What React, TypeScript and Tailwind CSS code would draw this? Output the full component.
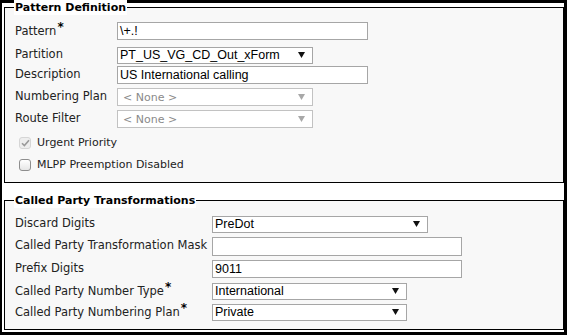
import React from "react";

type LegendBoxProps = {
  title: string;
  className?: string;
  bodyClassName?: string;
  children: React.ReactNode;
};

const LegendBox = ({ title, className, bodyClassName, children }: LegendBoxProps) => (
  <div className={`flex flex-col ${className ?? ""}`}>
    <div className="flex h-[15px]">
      <div className="w-[10px] h-[8px] self-end border-l border-t border-black bg-[#f8f8f8]" />
      <span className="bg-white px-[1px] leading-[15px] font-bold text-[11px] text-black relative">{title}</span>
      <div className="flex-1 h-[8px] self-end border-t border-r border-black bg-[#f8f8f8]" />
    </div>
    <div className={`flex flex-col border-x border-b border-black bg-[#f8f8f8] pl-[10px] pt-[6px] pb-[7px] ${bodyClassName ?? ""}`}>
      {children}
    </div>
  </div>
);

const Arrow = ({ disabled }: { disabled?: boolean }) => (
  <svg width="7" height="6" viewBox="0 0 7 6" className="shrink-0">
    <polygon points="0,0 7,0 3.5,6" fill={disabled ? "#a8a8a8" : "#111"} />
  </svg>
);

const Select = ({ value, width, height = "h-[17px]", disabled }: { value: string; width: string; height?: string; disabled?: boolean }) => (
  <div
    className={`${width} ${height} flex items-center justify-between border bg-white pr-[7px] ${
      disabled ? "border-[#c2c2c2] pl-[5px] text-[#8a8a8a] text-[11px] font-['DejaVu_Sans',sans-serif]" : "border-[#a6a6a6] pl-[2px] text-black text-[12.5px] font-['Liberation_Sans',Arial,sans-serif]"
    }`}
  >
    <span className="leading-none">{value}</span>
    <Arrow disabled={disabled} />
  </div>
);

const TextInput = ({ value, width, height = "h-[18px]" }: { value: string; width: string; height?: string }) => (
  <div className={`${width} ${height} flex items-center border border-[#a6a6a6] bg-white pl-[2px] text-[12.5px] text-black font-['Liberation_Sans',Arial,sans-serif]`}>
    <span className="leading-none">{value}</span>
  </div>
);

const Label = ({ text, required, width }: { text: string; required?: boolean; width: string }) => (
  <div className={`${width} shrink-0 text-[11.5px] text-[#222]`}>
    {text}
    {required && <span className="relative -top-[4px] ml-[1px] text-[12px] font-bold text-black">*</span>}
  </div>
);

const Row = ({ className, children }: { className?: string; children: React.ReactNode }) => (
  <div className={`flex items-center h-[20px] ${className ?? ""}`}>{children}</div>
);

const Checkbox = ({ checked, disabled }: { checked?: boolean; disabled?: boolean }) => (
  <span
    className={`w-[12px] h-[12px] rounded-[3px] border flex items-center justify-center ${
      disabled ? "border-[#d6d6d6] bg-[#eeeeee]" : "border-[#8e8e8e] bg-gradient-to-b from-white to-[#e6e6e6]"
    }`}
  >
    {checked && (
      <svg width="9" height="8" viewBox="0 0 9 8">
        <path d="M1 4.2 L3.4 6.6 L8 1.2" stroke="#9a9a9a" strokeWidth="1.6" fill="none" />
      </svg>
    )}
  </span>
);

export default function App() {
  return (
    <div className="w-[567px] h-[335px] bg-white border-black border-t-[3px] border-l-2 border-r-[3px] border-b-[3px] pl-[2px] pb-[2px] flex flex-col font-['DejaVu_Sans',Verdana,sans-serif] text-[11px]">
      <LegendBox title="Pattern Definition" className="-mt-[3px]">
        <Row>
          <Label text="Pattern" required width="w-[102px]" />
          <TextInput value="\+.!" width="w-[251px]" />
        </Row>
        <Row className="mt-[4px]">
          <Label text="Partition" width="w-[102px]" />
          <Select value="PT_US_VG_CD_Out_xForm" width="w-[196px]" />
        </Row>
        <Row>
          <Label text="Description" width="w-[102px]" />
          <TextInput value="US International calling" width="w-[251px]" />
        </Row>
        <Row className="mt-[2px]">
          <Label text="Numbering Plan" width="w-[102px]" />
          <Select value="< None >" width="w-[196px]" height="h-[18px]" disabled />
        </Row>
        <Row className="mt-[2px]">
          <Label text="Route Filter" width="w-[102px]" />
          <Select value="< None >" width="w-[196px]" height="h-[18px]" disabled />
        </Row>
        <Row className="mt-[4px] pl-[4px] gap-[6px]">
          <Checkbox checked disabled />
          <span className="text-[#222]">Urgent Priority</span>
        </Row>
        <Row className="mt-[2px] pl-[4px] gap-[6px]">
          <Checkbox />
          <span className="text-[#222]">MLPP Preemption Disabled</span>
        </Row>
      </LegendBox>

      <LegendBox title="Called Party Transformations" className="mt-[10px]">
        <Row>
          <Label text="Discard Digits" width="w-[197px]" />
          <Select value="PreDot" width="w-[216px]" />
        </Row>
        <Row className="mt-[2px]">
          <Label text="Called Party Transformation Mask" width="w-[197px]" />
          <TextInput value="" width="w-[250px]" height="h-[19px]" />
        </Row>
        <Row className="mt-[3px]">
          <Label text="Prefix Digits" width="w-[197px]" />
          <TextInput value="9011" width="w-[250px]" />
        </Row>
        <Row className="mt-[2px]">
          <Label text="Called Party Number Type" required width="w-[197px]" />
          <Select value="International" width="w-[195px]" />
        </Row>
        <Row className="mt-[1px]">
          <Label text="Called Party Numbering Plan" required width="w-[197px]" />
          <Select value="Private" width="w-[195px]" />
        </Row>
      </LegendBox>
    </div>
  );
}
